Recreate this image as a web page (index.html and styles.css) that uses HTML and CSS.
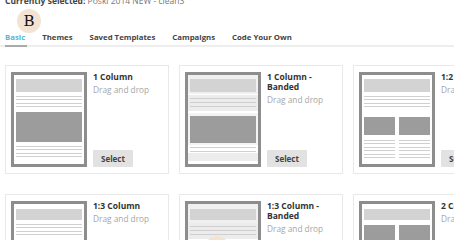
FILE: index.html
```html
<!DOCTYPE html>
<html>
<head>
<meta charset="utf-8">
<link rel="stylesheet" href="styles.css">
</head>
<body>
<div class="page">
  <div class="current"><b>Currently selected:</b> Poski 2014 NEW - clean3</div>
  <nav class="tabs">
    <span class="tab active">Basic</span>
    <span class="tab">Themes</span>
    <span class="tab">Saved Templates</span>
    <span class="tab">Campaigns</span>
    <span class="tab">Code Your Own</span>
  </nav>
  <div class="grid">
    <div class="card">
      <svg class="thumb" viewBox="0 0 76 95" width="76" height="95">
        <rect width="76" height="95" fill="#8d8d8d"/>
        <rect x="3" y="3" width="70" height="89" fill="#fff"/>
        <rect x="5" y="7" width="66" height="13" fill="#d3d3d3"/>
        <g fill="#d0d0d0"><rect x="5" y="24" width="66" height="1"/><rect x="5" y="27" width="66" height="1"/><rect x="5" y="31" width="66" height="1"/><rect x="5" y="34" width="66" height="1"/></g>
        <rect x="5" y="40" width="66" height="30" fill="#9c9c9c"/>
        <g fill="#d0d0d0"><rect x="5" y="74" width="66" height="1"/><rect x="5" y="77" width="66" height="1"/><rect x="5" y="81" width="66" height="1"/><rect x="5" y="84" width="66" height="1"/></g>
      </svg>
      <div class="info">
        <div class="title">1 Column</div>
        <div class="desc">Drag and drop</div>
        <button class="select">Select</button>
      </div>
    </div>
    <div class="card">
      <svg class="thumb" viewBox="0 0 76 95" width="76" height="95">
        <rect width="76" height="95" fill="#8d8d8d"/>
        <rect x="3" y="3" width="70" height="89" fill="#fff"/>
        <rect x="3" y="3" width="70" height="19" fill="#f0f0f0"/>
        <rect x="5" y="7" width="66" height="13" fill="#d3d3d3"/>
        <rect x="3" y="23" width="70" height="16" fill="#ececec"/>
        <g fill="#cfcfcf"><rect x="5" y="26" width="66" height="1"/><rect x="5" y="30" width="66" height="1"/><rect x="5" y="34" width="66" height="1"/></g>
        <rect x="3" y="41" width="70" height="32" fill="#f3f3f3"/>
        <rect x="5" y="44" width="66" height="27" fill="#9c9c9c"/>
        <g fill="#d0d0d0"><rect x="5" y="75" width="66" height="1"/><rect x="5" y="79" width="66" height="1"/></g>
        <rect x="3" y="81" width="70" height="8" fill="#ececec"/>
      </svg>
      <div class="info">
        <div class="title">1 Column - Banded</div>
        <div class="desc">Drag and drop</div>
        <button class="select">Select</button>
      </div>
    </div>
    <div class="card">
      <svg class="thumb" viewBox="0 0 76 95" width="76" height="95">
        <rect width="76" height="95" fill="#8d8d8d"/>
        <rect x="3" y="3" width="70" height="89" fill="#fff"/>
        <rect x="5" y="7" width="66" height="13" fill="#d3d3d3"/>
        <g fill="#d0d0d0"><rect x="5" y="24" width="66" height="1"/><rect x="5" y="27" width="66" height="1"/><rect x="5" y="31" width="66" height="1"/><rect x="5" y="34" width="66" height="1"/></g>
        <rect x="5" y="45" width="31" height="18" fill="#9c9c9c"/>
        <rect x="40" y="45" width="31" height="18" fill="#9c9c9c"/>
        <g fill="#d0d0d0"><rect x="5" y="68" width="31" height="1"/><rect x="5" y="71" width="31" height="1"/><rect x="5" y="75" width="31" height="1"/><rect x="5" y="78" width="31" height="1"/><rect x="5" y="82" width="31" height="1"/><rect x="5" y="85" width="31" height="1"/>
        <rect x="40" y="68" width="31" height="1"/><rect x="40" y="71" width="31" height="1"/><rect x="40" y="75" width="31" height="1"/><rect x="40" y="78" width="31" height="1"/><rect x="40" y="82" width="31" height="1"/><rect x="40" y="85" width="31" height="1"/></g>
      </svg>
      <div class="info">
        <div class="title">1:2 Column</div>
        <div class="desc">Drag and drop</div>
        <button class="select">Select</button>
      </div>
    </div>
    <div class="card">
      <svg class="thumb" viewBox="0 0 76 95" width="76" height="95">
        <rect width="76" height="95" fill="#8d8d8d"/>
        <rect x="3" y="3" width="70" height="89" fill="#fff"/>
        <rect x="5" y="8" width="66" height="11" fill="#d3d3d3"/>
        <g fill="#d0d0d0"><rect x="5" y="23" width="66" height="1"/><rect x="5" y="26" width="66" height="1"/><rect x="5" y="30" width="66" height="1"/><rect x="5" y="33" width="66" height="1"/></g>
        <rect x="5" y="42" width="20" height="18" fill="#9c9c9c"/>
        <rect x="29" y="42" width="42" height="18" fill="#9c9c9c"/>
      </svg>
      <div class="info">
        <div class="title">1:3 Column</div>
        <div class="desc">Drag and drop</div>
        <button class="select">Select</button>
      </div>
    </div>
    <div class="card">
      <svg class="thumb" viewBox="0 0 76 95" width="76" height="95">
        <rect width="76" height="95" fill="#8d8d8d"/>
        <rect x="3" y="3" width="70" height="89" fill="#fff"/>
        <rect x="3" y="3" width="70" height="19" fill="#f0f0f0"/>
        <rect x="5" y="8" width="66" height="11" fill="#d3d3d3"/>
        <rect x="3" y="22" width="70" height="16" fill="#ececec"/>
        <g fill="#cfcfcf"><rect x="5" y="25" width="66" height="1"/><rect x="5" y="29" width="66" height="1"/><rect x="5" y="33" width="66" height="1"/></g>
        <rect x="5" y="42" width="20" height="18" fill="#9c9c9c"/>
        <rect x="29" y="42" width="42" height="18" fill="#9c9c9c"/>
      </svg>
      <div class="info">
        <div class="title">1:3 Column - Banded</div>
        <div class="desc">Drag and drop</div>
        <button class="select">Select</button>
      </div>
    </div>
    <div class="card">
      <svg class="thumb" viewBox="0 0 76 95" width="76" height="95">
        <rect width="76" height="95" fill="#8d8d8d"/>
        <rect x="3" y="3" width="70" height="89" fill="#fff"/>
        <rect x="5" y="8" width="66" height="11" fill="#d3d3d3"/>
        <rect x="5" y="24" width="31" height="22" fill="#9c9c9c"/>
        <rect x="40" y="24" width="31" height="22" fill="#9c9c9c"/>
      </svg>
      <div class="info">
        <div class="title">2 Column</div>
        <div class="desc">Drag and drop</div>
        <button class="select">Select</button>
      </div>
    </div>
  </div>
</div>
<div class="avatar avatar-top">B</div>
<div class="avatar avatar-bottom"></div>
</body>
</html>
```
FILE: styles.css
```css
html, body {
  margin: 0;
  padding: 0;
  background: #fff;
  overflow: hidden;
  width: 454px;
  height: 240px;
}
body {
  font-family: "Open Sans", "Liberation Sans", sans-serif;
  color: #444;
  position: relative;
}
.page {
  padding: 0 5px;
}
.current {
  margin-top: -5px;
  font-size: 8.5px;
  line-height: 11px;
  color: #777;
  white-space: nowrap;
}
.current b {
  color: #444;
  font-weight: 700;
}
.tabs {
  margin-top: 26px;
  display: flex;
  gap: 17px;
  border-bottom: 2px solid #eeeeee;
  width: 600px;
  margin-left: -5px;
  padding-left: 5px;
}
.tab {
  font-size: 7.8px;
  font-weight: 700;
  line-height: 11px;
  padding-bottom: 2px;
  color: #444;
  white-space: nowrap;
}
.tab.active {
  color: #5ab4d9;
  border-bottom: 2px solid #aaaaaa;
  margin-bottom: -2px;
  padding-right: 2px;
  margin-right: -2px;
}
.grid {
  margin-top: 18px;
  display: grid;
  grid-template-columns: repeat(3, 164px);
  column-gap: 10px;
  row-gap: 20px;
  width: 520px;
}
.card {
  box-sizing: border-box;
  height: 109px;
  border: 1px solid #e9e9e9;
  box-shadow: 0 0 1px rgba(0,0,0,0.04);
  padding: 6px 10px 5px 5px;
  display: flex;
  gap: 6px;
  background: #fff;
}
.thumb {
  display: block;
  flex: none;
}
.info {
  display: flex;
  flex-direction: column;
  align-items: flex-start;
  flex: 1;
  min-width: 0;
}
.title {
  font-size: 8.5px;
  font-weight: 700;
  line-height: 10px;
  color: #333;
}
.desc {
  margin-top: 3px;
  font-size: 8.3px;
  line-height: 10px;
  color: #a6a6a6;
}
.select {
  margin-top: auto;
  margin-bottom: 1px;
  width: 40px;
  height: 17px;
  border: none;
  border-radius: 1px;
  background: #e2e2e2;
  font-family: "Open Sans", "Liberation Sans", sans-serif;
  font-size: 8px;
  font-weight: 700;
  color: #444;
  padding: 0;
}
.avatar {
  position: absolute;
  width: 24px;
  height: 24px;
  border-radius: 50%;
  background: #f2e3d3;
  display: flex;
  align-items: center;
  justify-content: center;
  font-family: "DejaVu Serif", "Liberation Serif", serif;
  font-size: 15px;
  color: #111;
  line-height: 1;
}
.avatar-top {
  left: 17px;
  top: 9px;
}
.avatar-bottom {
  left: 205px;
  top: 236px;
}
```
